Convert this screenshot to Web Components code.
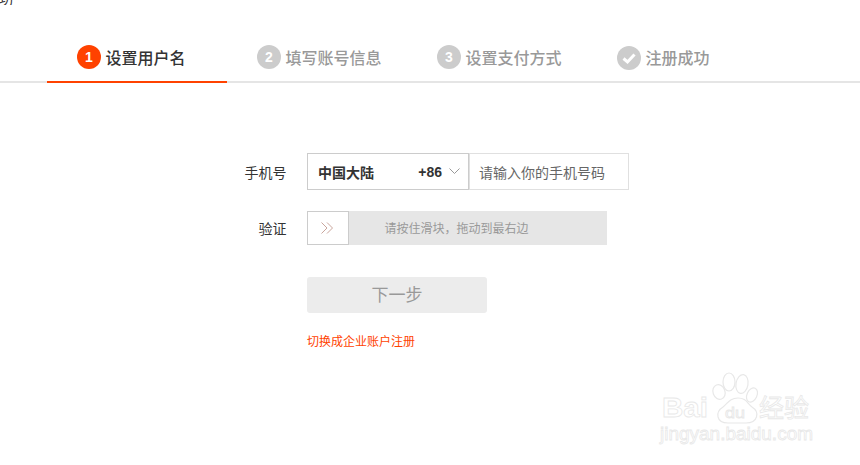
<!DOCTYPE html>
<html lang="zh">

<head>
    <meta charset="UTF-8">
    <title>注册</title>
    <style>
        html, body { margin: 0; height: 100%; background: #fff; overflow: hidden; }
        body { font-family: "Noto Sans CJK SC", sans-serif; position: relative; }
    </style>
</head>

<body>
    <step-bar>
        <step-item num="1" active>设置用户名</step-item>
        <step-item num="2">填写账号信息</step-item>
        <step-item num="3">设置支付方式</step-item>
        <step-item done>注册成功</step-item>
    </step-bar>
    <reg-form></reg-form>
    <bd-watermark></bd-watermark>

    <script>
        const FONT = '"Noto Sans CJK SC", sans-serif';

        class StepBar extends HTMLElement {
            constructor() {
                super();
                this.attachShadow({ mode: 'open' }).innerHTML = `
                    <style>
                        :host { display: block; font-family: ${FONT}; }
                        .cut { height: 5px; overflow: hidden; font-size: 14px; line-height: 14px; color: #333; margin-left: -1px; }
                        .cut span { display: block; margin-top: -9px; }
                        .bar { margin-top: 29px; height: 47px; padding-left: 47px; display: flex; border-bottom: 2px solid #e5e5e5; }
                    </style>
                    <div class="cut"><span>功</span></div>
                    <div class="bar"><slot></slot></div>`;
            }
        }

        class StepItem extends HTMLElement {
            constructor() {
                super();
                const active = this.hasAttribute('active');
                const done = this.hasAttribute('done');
                const badge = done
                    ? `<svg width="16" height="16" viewBox="0 0 16 16"><path d="M2.5 8.5 L6.5 12 L13.5 4.5" fill="none" stroke="#fff" stroke-width="3"/></svg>`
                    : this.getAttribute('num');
                this.attachShadow({ mode: 'open' }).innerHTML = `
                    <style>
                        :host { display: flex; box-sizing: border-box; width: 180px; height: 49px; padding: 11px 0 0 30px; gap: 4.5px;
                                border-bottom: 2px solid ${active ? '#ff4200' : 'transparent'}; font-family: ${FONT}; }
                        .dot { width: 24px; height: 24px; border-radius: 50%; background: ${active ? '#ff4200' : '#ccc'}; color: #fff;
                               font: bold 14px/24px "Liberation Sans", sans-serif; text-align: center; margin-top: ${done ? 1 : 0}px;
                               display: flex; align-items: center; justify-content: center; }
                        .txt { font-size: 16px; line-height: 24px; font-weight: 500; color: ${active ? '#333' : '#999'}; white-space: nowrap; }
                    </style>
                    <div class="dot">${badge}</div>
                    <div class="txt"><slot></slot></div>`;
            }
        }

        class FormRow extends HTMLElement {
            constructor() {
                super();
                this.attachShadow({ mode: 'open' }).innerHTML = `
                    <style>
                        :host { display: flex; align-items: center; font-family: ${FONT}; }
                        .label { width: 286.5px; box-sizing: border-box; text-align: right; font-size: 14px; color: #333; margin-right: 20.5px; }
                    </style>
                    <div class="label">${this.getAttribute('label')}</div>
                    <slot></slot>`;
            }
        }

        class PhoneField extends HTMLElement {
            constructor() {
                super();
                this.attachShadow({ mode: 'open' }).innerHTML = `
                    <style>
                        :host { display: flex; height: 37px; font-family: ${FONT}; }
                        .sel { box-sizing: border-box; width: 162px; border: 1px solid #ccc; display: flex; align-items: center; padding: 0 8px 0 10px; }
                        .name { font-size: 14px; font-weight: 700; color: #333; flex: 1; }
                        .code { font: bold 14px "Liberation Sans", sans-serif; color: #333; margin-right: 7px; }
                        .inp { box-sizing: border-box; width: 160px; border: 1px solid #e0e0e0; display: flex; align-items: center;
                               padding-left: 9px; font-size: 14px; color: #666; white-space: nowrap; }
                    </style>
                    <div class="sel">
                        <span class="name">中国大陆</span><span class="code">+86</span>
                        <svg width="11" height="7" viewBox="0 0 11 7"><path d="M0.5 0.5 L5.5 5.5 L10.5 0.5" fill="none" stroke="#999"/></svg>
                    </div>
                    <div class="inp">请输入你的手机号码</div>`;
            }
        }

        class SlideVerify extends HTMLElement {
            constructor() {
                super();
                this.attachShadow({ mode: 'open' }).innerHTML = `
                    <style>
                        :host { display: flex; width: 300px; height: 34px; background: #e6e6e6; font-family: ${FONT}; }
                        .knob { box-sizing: border-box; width: 42px; background: #fff; border: 1px solid #ccc; display: flex; align-items: center; justify-content: center; padding-right: 3px; }
                        .tip { flex: 1; font-size: 12px; line-height: 34px; color: #999; padding-left: 35.5px; }
                    </style>
                    <div class="knob">
                        <svg width="12" height="12" viewBox="0 0 12 12"><path d="M0.5 0.5 L6 6 L0.5 11.5 M6 0.5 L11.5 6 L6 11.5" fill="none" stroke="#c9a59c"/></svg>
                    </div>
                    <div class="tip">请按住滑块，拖动到最右边</div>`;
            }
        }

        class RegForm extends HTMLElement {
            constructor() {
                super();
                this.attachShadow({ mode: 'open' }).innerHTML = `
                    <style>
                        :host { display: block; padding-top: 70px; font-family: ${FONT}; }
                        .gap { height: 21px; }
                        .next { margin: 32px 0 0 307px; width: 180px; height: 36px; border-radius: 3px; background: #ececec; color: #999;
                                font-size: 17px; line-height: 34px; text-align: center; }
                        .link { margin: 19px 0 0 307px; font-size: 12px; line-height: 18px; color: #ff4200; }
                    </style>
                    <form-row label="手机号"><phone-field></phone-field></form-row>
                    <div class="gap"></div>
                    <form-row label="验证"><slide-verify></slide-verify></form-row>
                    <div class="next">下一步</div>
                    <div class="link">切换成企业账户注册</div>`;
            }
        }

        // 右下角水印
        class BdWatermark extends HTMLElement {
            constructor() {
                super();
                this.attachShadow({ mode: 'open' }).innerHTML = `
                    <style>
                        :host { position: absolute; left: 650px; top: 365px; width: 180px; height: 100px; display: block; }
                        text { fill: #fff; stroke: #e8e8e8; stroke-width: 0.8px; }
                    </style>
                    <svg width="180" height="100" viewBox="0 0 180 100">
                        <g fill="#fff" stroke="#e8e8e8" stroke-width="1.2">
                            <ellipse cx="69" cy="27" rx="6" ry="7.5" transform="rotate(-20 69 27)"/>
                            <ellipse cx="79" cy="17" rx="6" ry="9"/>
                            <ellipse cx="92" cy="19" rx="6" ry="9.5" transform="rotate(10 92 19)"/>
                            <ellipse cx="102" cy="30" rx="5" ry="7.5" transform="rotate(25 102 30)"/>
                            <path d="M88 33 C80 33 78 38 73 42 C65 47 66 58 78 58 L96 58 C108 58 110 47 102 42 C97 38 96 33 88 33 Z"/>
                        </g>
                        <text x="12" y="52" font-family="Liberation Sans" font-size="28" font-weight="700" textLength="46" lengthAdjust="spacingAndGlyphs">Bai</text>
                        <text x="75" y="53" font-family="Liberation Sans" font-size="15" textLength="20" lengthAdjust="spacingAndGlyphs">du</text>
                        <text x="109" y="52" font-family="Noto Sans CJK SC" font-size="25">经验</text>
                        <text x="10" y="75" font-family="Liberation Sans" font-size="19" textLength="153" lengthAdjust="spacingAndGlyphs">jingyan.baidu.com</text>
                    </svg>`;
            }
        }

        customElements.define('step-bar', StepBar);
        customElements.define('step-item', StepItem);
        customElements.define('form-row', FormRow);
        customElements.define('phone-field', PhoneField);
        customElements.define('slide-verify', SlideVerify);
        customElements.define('reg-form', RegForm);
        customElements.define('bd-watermark', BdWatermark);
    </script>
</body>

</html>
